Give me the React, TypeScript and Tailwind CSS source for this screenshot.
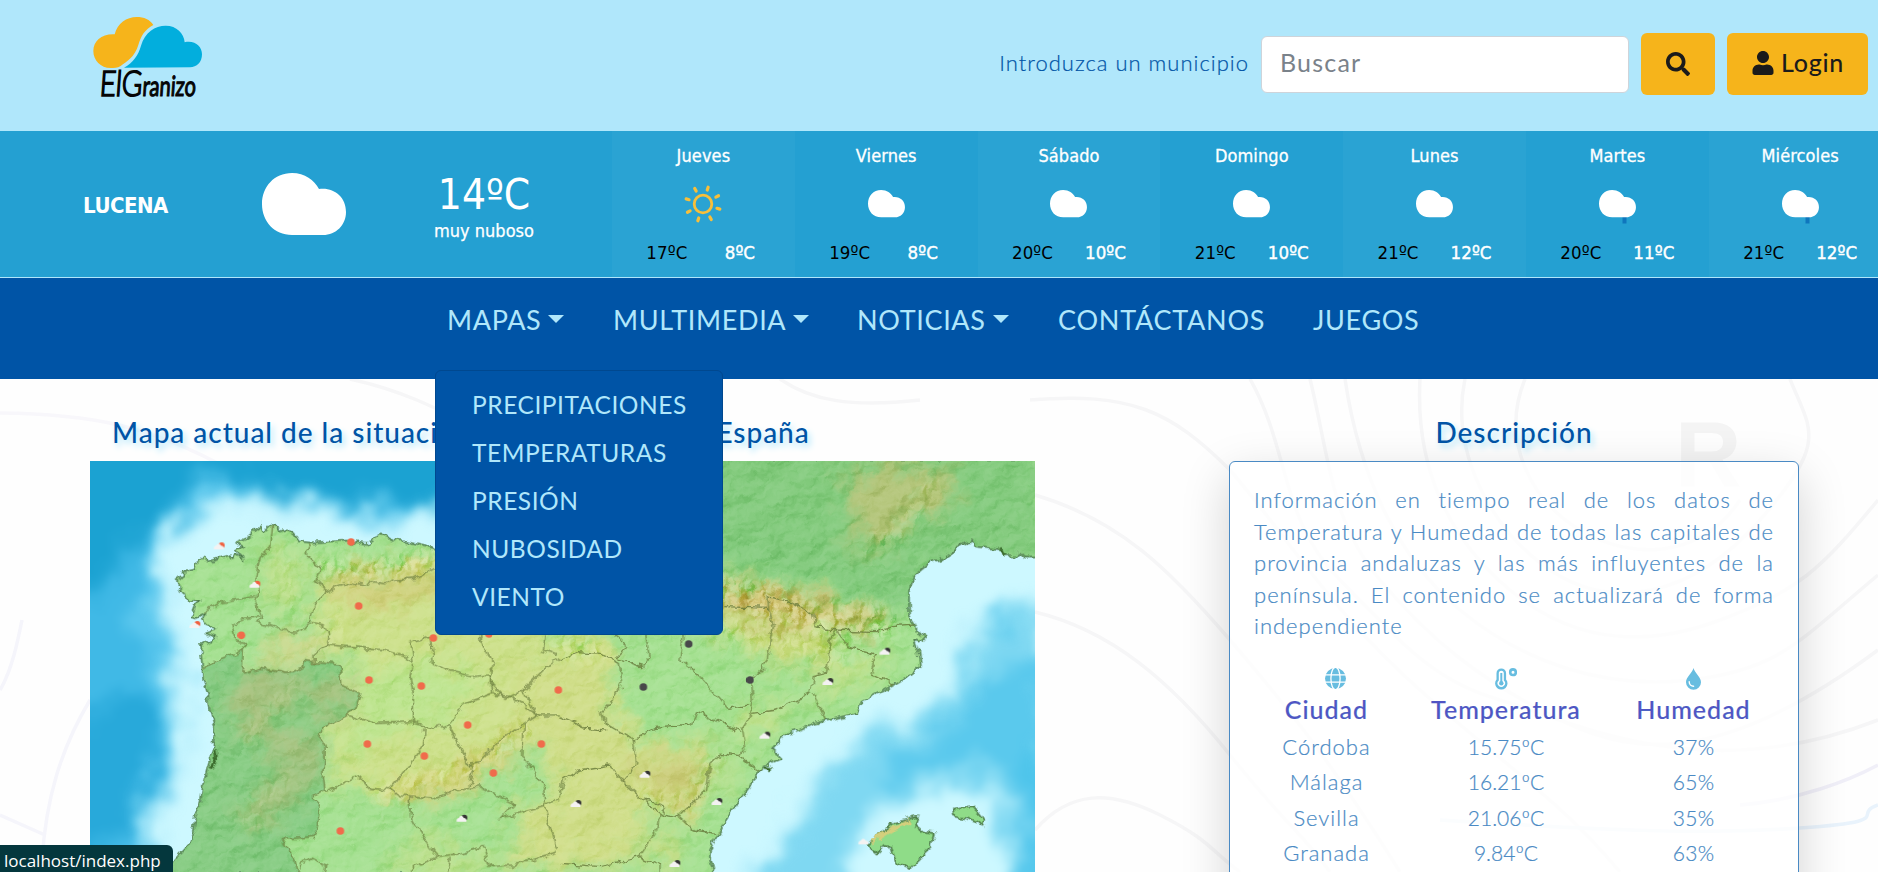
import React from "react";
import { FaSearch, FaUser } from "react-icons/fa";

const CLOUD =
  "M30 0C43 0 52 7 57 16C72 14 84 24 84 39C84 52 74 62 61 62H30C12 62 0 48 0 31C0 14 12 0 30 0Z";

function Logo() {
  return (
    <svg width="140" height="115" viewBox="0 0 420 345" className="block overflow-visible">
      <path
        fill="#f6b41b"
        d="M92 189C62 189 40 166 40 138C40 108 65 86 104 88C112 55 140 36 170 36C192 36 210 44 220 60C195 72 182 95 175 120C165 155 140 170 122 183C112 189 102 189 92 189Z"
      />
      <path
        fill="#02aedd"
        d="M132 188C160 172 175 150 183 122C195 82 225 62 257 62C290 62 312 85 314 112C345 105 366 125 366 148C366 172 350 187 330 187Z"
      />
      <g fontFamily="Lato, sans-serif" fill="#050505" stroke="#050505" transform="skewX(-4)">
        <text x="76" y="274" fontSize="106" fontWeight="300" strokeWidth="5" textLength="128" lengthAdjust="spacingAndGlyphs">
          ElG
        </text>
        <text x="205" y="274" fontSize="84" strokeWidth="3.5" textLength="160" lengthAdjust="spacingAndGlyphs">
          ranizo
        </text>
      </g>
    </svg>
  );
}

type Kind = "sun" | "cloud" | "rain";

function DayIcon({ kind }: { kind: Kind }) {
  if (kind === "sun") {
    const rays = [17, 62, 107, 152, 197, 242, 287, 332];
    return (
      <svg width="40" height="40" viewBox="-20 -20 40 40" fill="none" stroke="#f8bf3a" strokeLinecap="round">
        <circle r="8.8" strokeWidth="2.8" />
        {rays.map((r) => (
          <line key={r} y1="-14.6" y2="-17.6" strokeWidth="3.2" transform={`rotate(${r})`} />
        ))}
      </svg>
    );
  }
  return (
    <svg width="37" height="40" viewBox="0 0 37 40">
      {kind === "rain" && <path d="M25.5 30v9.5" stroke="#0f76bd" strokeWidth="4" />}
      <path d={CLOUD} fill="#fff" transform="translate(0 6) scale(.44)" />
    </svg>
  );
}

const DAYS: { name: string; kind: Kind; max: number; min: number }[] = [
  { name: "Jueves", kind: "sun", max: 17, min: 8 },
  { name: "Viernes", kind: "cloud", max: 19, min: 8 },
  { name: "Sábado", kind: "cloud", max: 20, min: 10 },
  { name: "Domingo", kind: "cloud", max: 21, min: 10 },
  { name: "Lunes", kind: "cloud", max: 21, min: 12 },
  { name: "Martes", kind: "rain", max: 20, min: 11 },
  { name: "Miércoles", kind: "rain", max: 21, min: 12 },
];

function WeatherBar() {
  return (
    <section className="flex h-[146px] overflow-hidden bg-[#24a0d2] font-['DejaVu_Sans_Condensed','DejaVu_Sans',sans-serif] text-white [font-stretch:condensed]">
      <div className="flex w-[612px] shrink-0 items-start">
        <div className="w-[251px] pt-[61px] text-center text-[22px] leading-[28px] font-bold tracking-[-0.5px]">LUCENA</div>
        <svg width="84" height="62" viewBox="0 0 84 62" className="mt-[42px] ml-[11px]">
          <path d={CLOUD} fill="#fff" />
        </svg>
        <div className="ml-[38px] w-[200px] pt-[39px] text-center">
          <div className="text-[42px] leading-[49px]">14ºC</div>
          <div className="text-[18px] leading-[24px] [-webkit-text-stroke:0.25px_white]">muy nuboso</div>
        </div>
      </div>
      {DAYS.map((d, i) => (
        <div key={d.name} className={`flex w-[182.8px] shrink-0 flex-col items-center pt-[13px] ${i % 2 ? "" : "bg-[#2aa3d3]"}`}>
          <div className="h-[24px] text-[18px] leading-[24px] tracking-[0.1px] [-webkit-text-stroke:0.3px_white]">{d.name}</div>
          <div className="mt-[16px] h-[40px]">
            <DayIcon kind={d.kind} />
          </div>
          <div className="mt-[17px] flex text-[18.5px] leading-[24px] tracking-[0.1px]">
            <span className="w-[73px] text-center text-black">{d.max}ºC</span>
            <span className="w-[73px] text-center [-webkit-text-stroke:0.4px_white]">{d.min}ºC</span>
          </div>
        </div>
      ))}
    </section>
  );
}

function Caret() {
  return <span className="mt-[-3px] ml-[7px] inline-block border-x-[8px] border-t-[8px] border-x-transparent border-t-[#b0e7fb]" />;
}

function Nav() {
  const sub = ["PRECIPITACIONES", "TEMPERATURAS", "PRESIÓN", "NUBOSIDAD", "VIENTO"];
  return (
    <nav className="relative z-20 mt-px h-[101px] bg-[#0054a6] text-[#b0e7fb]">
      <ul className="flex pt-[23px] pl-[447px] text-[27px] leading-[38px] tracking-[0.65px] whitespace-nowrap">
        <li className="flex w-[166px] items-center">MAPAS<Caret /></li>
        <li className="flex w-[244px] items-center">MULTIMEDIA<Caret /></li>
        <li className="flex w-[201px] items-center">NOTICIAS<Caret /></li>
        <li className="w-[255px] tracking-[0.75px]">CONTÁCTANOS</li>
        <li>JUEGOS</li>
      </ul>
      <ul className="absolute top-[92px] left-[435px] h-[265px] w-[288px] rounded-[6px] border border-[#00488f] bg-[#0054a6] pt-[10px] pl-[36px] text-[24.5px] tracking-[0.55px]">
        {sub.map((s) => (
          <li key={s} className="h-[48px] leading-[48px]">{s}</li>
        ))}
      </ul>
    </nav>
  );
}

/* Province borders; the second group is measured from x = 1440. */
const BORDERS_WEST = [
  "578,372 572,440 540,470 530,530 535,580 525,600 545,650 535,665 610,690 665,695",
  "370,640 425,605 525,590",
  "540,650 490,655 458,670 470,720 490,725 490,750",
  "695,428 675,460 725,510 708,545 735,575 700,620 690,665 665,695",
  "735,575 815,545 850,555 880,545 915,552 945,540 1000,538 1065,505",
  "690,665 730,675 748,710 740,735 705,760 705,790",
  "740,735 840,742 910,750 975,770 1000,790 990,730 1050,710 1060,790 1110,815 1170,830 1230,825 1235,880 1150,910 1130,945 1105,975 1060,985 1000,970 1000,880 990,830 1000,790",
  "800,945 850,960 890,970 1000,965",
  "1105,975 1140,1040 1165,1090 1200,1085 1260,1020 1330,970 1370,945 1290,890 1235,880",
  "1035,985 1030,1040 975,1110 930,1165 960,1185 1060,1195 1110,1175 1200,1160 1300,1210 1260,1255 1390,1220 1440,1195",
  "735,1175 835,1130 870,1165 930,1170",
  "1165,1090 1180,1110 1170,1160",
  "990,1190 995,1260 1030,1310 1070,1370 1140,1360 1210,1340 1230,1400 1300,1395 1430,1360",
  "1070,1370 1000,1400 990,1425",
  "1110,1370 1105,1425",
  "655,1425 670,1385 700,1375 740,1395 735,1425",
  "1330,970 1325,1060 1390,1160 1395,1220 1430,1350",
  "1195,705 1240,790 1230,850 1275,895 1330,870 1400,800 1440,775",
  "1395,705 1390,750 1430,765",
  "1330,870 1350,910 1370,945 1440,945",
  "370,805 400,785 490,750 487,800 500,822 540,805 625,820 668,800 668,785 780,795 785,855 842,880 830,920 795,945 750,970 715,1005 735,1040 735,1080 730,1130 735,1170 700,1190 720,1230 715,1280 700,1310 607,1318 640,1370 655,1425",
];
const BORDERS_EAST = [
  "490,620 625,625 625,590 690,605 760,640 770,680 830,690 950,695 1000,680 1065,675",
  "625,625 640,680 625,780 575,840 580,900 570,950 545,990 555,1050 540,1070",
  "165,705 205,740 170,775 245,800 270,770 260,705",
  "370,705 360,780 420,830 500,925 570,915",
  "0,780 50,755 120,760 175,790 185,850 155,910 125,940 135,970 220,1020 280,985 390,975 410,935 540,995",
  "0,950 80,985 135,990",
  "220,1020 230,1090 190,1145 250,1200 300,1240 355,1250 440,1170 450,1090 480,1060 540,1070 600,1115",
  "250,1200 280,1205 315,1225 300,1240",
  "0,1190 10,1140 60,1110 150,1095 190,1145",
  "300,1240 290,1290 240,1370 120,1400 0,1390",
  "240,1370 300,1395 300,1425",
  "355,1250 400,1290 470,1300",
  "575,940 650,930 750,880 760,830 800,820 810,720 830,690",
  "760,880 800,962",
  "830,690 860,740 950,765 930,820 1000,855",
];

const RED = [
  [813, 426], [836, 618], [484, 706], [867, 840], [1024, 858], [1060, 714], [1227, 702],
  [1163, 975], [862, 1032], [1033, 1068], [1384, 1032], [1240, 1119], [781, 1293], [1435, 870],
];
const DARK = [[1826, 732], [1690, 861], [2010, 840]];
const CLOUDY: [number, number, string][] = [
  [418, 437, "#f0603f"], [525, 552, "#f0603f"], [345, 673, "#f0603f"],
  [1146, 1254, "#333"], [2415, 753, "#333"], [2244, 844, "#333"], [2055, 1005, "#333"],
  [1695, 1122, "#333"], [1911, 1204, "#333"], [1488, 1210, "#333"], [1785, 1390, "#333"], [2352, 1322, "none"],
];

const MAINLAND =
  "M262 1425L282 1385 330 1330 345 1260 362 1200 370 1150 385 1090 400 1040 405 985 388 920 385 885 370 840 363 757 360 735 372 735 410 712 375 700 412 688 378 672 365 655 380 638 345 655 330 652 345 615 362 600 325 605 318 585 295 575 298 560 290 540 310 530 312 512 345 505 350 490 372 475 382 488 450 468 458 478 468 462 488 482 470 448 490 440 465 425 500 410 545 375 555 395 578 372 600 392 615 385 640 400 655 424 690 428 800 422 862 432 905 403 940 422 975 425 1065 445 1200 450 1400 430 1500 300 1520 175H2880V473H2835L2820 458 2805 470 2770 468 2758 448 2685 440 2675 423 2655 430 2580 478 2550 487 2500 530 2487 570V650L2508 680 2512 700 2537 710 2522 725 2502 720 2515 755 2520 800 2480 830 2440 855 2345 905 2325 940 2240 962 2200 972 2160 990 2125 998 2078 1050 2105 1075 2050 1098 2005 1165 1950 1240 1910 1310 1890 1350V1385L1905 1425Z";
const PORTUGAL =
  "M262 1425L282 1385 330 1330 345 1260 362 1200 385 1090 405 985 385 885 370 805 400 785 490 750 487 800 500 822 540 805 625 820 668 800 668 785 780 795 785 855 842 880 830 920 795 945 750 970 715 1005 735 1040 735 1080 730 1130 735 1170 700 1190 720 1230 715 1280 700 1310 607 1318 640 1370 655 1425Z";
const MALLORCA =
  "M2360 1335L2440 1270 2515 1250 2505 1275 2530 1295 2565 1300 2555 1340 2520 1375 2490 1405 2445 1385 2430 1340 2412 1338 2390 1360Z";
const MENORCA = "M2622 1225L2680 1218 2715 1260 2710 1280 2660 1255 2625 1250Z";

function SpainMap() {
  return (
    <svg width="945" height="411" viewBox="30 183 2835 1233" preserveAspectRatio="none" className="block">
      <defs>
        <filter id="sea" x="-200" y="0" width="3300" height="1600" filterUnits="userSpaceOnUse" colorInterpolationFilters="sRGB">
          <feGaussianBlur stdDeviation="26" result="b" />
          <feTurbulence type="fractalNoise" baseFrequency="0.009" numOctaves="5" seed="4" result="n" />
          <feDisplacementMap in="b" in2="n" scale="130" xChannelSelector="R" yChannelSelector="G" />
          <feGaussianBlur stdDeviation="9" />
        </filter>
        <filter id="jag" x="0" y="100" width="2900" height="1400" filterUnits="userSpaceOnUse" colorInterpolationFilters="sRGB">
          <feTurbulence type="fractalNoise" baseFrequency="0.035" numOctaves="3" seed="9" />
          <feDisplacementMap in="SourceGraphic" scale="26" xChannelSelector="R" yChannelSelector="G" />
        </filter>
        <filter id="patch" x="0" y="100" width="2900" height="1400" filterUnits="userSpaceOnUse" colorInterpolationFilters="sRGB">
          <feGaussianBlur stdDeviation="30" result="b" />
          <feTurbulence type="fractalNoise" baseFrequency="0.015" numOctaves="4" seed="2" result="n" />
          <feDisplacementMap in="b" in2="n" scale="130" xChannelSelector="R" yChannelSelector="G" />
        </filter>
        <filter id="fine" x="0" y="100" width="2900" height="1400" filterUnits="userSpaceOnUse" colorInterpolationFilters="sRGB">
          <feTurbulence type="fractalNoise" baseFrequency="0.011 0.015" numOctaves="4" seed="12" />
          <feDiffuseLighting surfaceScale="16" diffuseConstant="0.72" lightingColor="#fff">
            <feDistantLight azimuth="225" elevation="50" />
          </feDiffuseLighting>
        </filter>
        <filter id="rough" x="0" y="100" width="2900" height="1400" filterUnits="userSpaceOnUse" colorInterpolationFilters="sRGB">
          <feTurbulence type="fractalNoise" baseFrequency="0.026 0.018" numOctaves="3" seed="7" />
          <feDiffuseLighting surfaceScale="24" diffuseConstant="0.8" lightingColor="#fff4dc">
            <feDistantLight azimuth="225" elevation="46" />
          </feDiffuseLighting>
        </filter>
        <filter id="soft" x="0" y="100" width="2900" height="1400" filterUnits="userSpaceOnUse">
          <feGaussianBlur stdDeviation="20" />
        </filter>
        <clipPath id="land">
          <path d={MAINLAND} />
          <path d={MALLORCA} />
        </clipPath>
        <mask id="hills" maskUnits="userSpaceOnUse" x="0" y="100" width="2900" height="1400">
          <g filter="url(#soft)" fill="none" stroke="#fff" strokeLinecap="round">
            <path d="M730 500L870 510 1080 480" strokeWidth="60" />
            <path d="M1900 570L2060 600 2200 650 2400 670" strokeWidth="95" />
            <path d="M1930 690L2150 720 2280 760" strokeWidth="90" opacity=".6" />
            <path d="M2360 450L2450 400 2560 250" strokeWidth="60" opacity=".5" />
            <path d="M900 1190L1050 1140 1180 1100 1330 990" strokeWidth="50" opacity=".8" />
            <path d="M500 1230L620 1140M500 1020L640 860M560 1260L480 1270" strokeWidth="40" opacity=".4" />
            <path d="M1700 1180L1820 1220 1900 1080" strokeWidth="70" opacity=".5" />
            <path d="M1440 740L1560 760" strokeWidth="60" opacity=".8" />
            <path d="M700 740L780 670M600 460L650 640" strokeWidth="60" opacity=".4" />
          </g>
        </mask>
      </defs>

      <rect x="0" y="150" width="2900" height="1300" fill="#cdf8ff" />
      <g filter="url(#sea)">
        <path fill="#5cc8ee" d="M-100 50H1500V240L1300 270 1160 300 1060 310 940 370 850 350 760 340 560 295 380 290 330 370 220 430 255 520 250 640 280 760 300 850 290 960 310 1060 260 1150 200 1240 230 1400 180 1500H-100Z" />
        <path fill="#40b9e6" d="M-100 300H180L200 560 130 700 200 760 240 880 265 1000 240 1180 150 1250 140 1500H-100Z" />
        <path fill="#1ba2d2" d="M-100 50H1300V230L1150 290 980 310 850 320 640 290 540 275 440 235 330 235 290 360 130 440 70 560-100 620Z" />
        <path fill="#28a9da" d="M-100 900L60 950 100 860 220 930 250 1050 200 1150 150 1280 60 1340-100 1380Z" />
        <path fill="#7fd8f2" d="M2900 620L2720 690 2640 700 2640 870 2500 960 2400 1000 2280 1060 2200 1150 2160 1280 2040 1400 2020 1600H2900Z" />
        <path fill="#5ac9ed" d="M2920 760L2700 820 2600 980 2420 1080 2400 1160 2560 1100 2720 1080 2800 1150 2830 1300 2820 1550H2920Z" />
        <path fill="#4cc4eb" d="M2730 640L2780 620 2780 700 2730 720ZM2920 1000L2820 1100 2850 1300 2850 1550H2920Z" />
        <path fill="#cdf8ff" d="M2300 1440L2340 1290 2460 1200 2600 1150 2710 1160 2770 1230 2770 1500H2300Z" />
      </g>

      <g filter="url(#jag)">
        <g clipPath="url(#land)" className="isolate">
          <rect x="0" y="150" width="2900" height="1300" fill="#a4e090" />
          <g filter="url(#patch)">
            <path fill="#82ca7c" d="M1450 100H2900V500L2540 520 2480 660 2300 590 2000 520 1450 500Z" />
            <path fill="#cce08a" d="M720 560L1100 480 1400 560 1420 900 1240 1100 960 1180 760 1160 740 960 820 800 700 720Z" />
            <path fill="#bde48e" d="M800 780L1200 800 1200 900 800 1080Z" />
            <path fill="#d0cc78" d="M740 560L1000 550 1200 500 1200 570 860 620Z" />
            <path fill="#cfdd88" d="M1300 800L1620 760 1600 950 1760 1040 1900 1000 1860 1260 1700 1230 1640 1400H1300V1230L1440 1180 1330 1000Z" />
            <path fill="#cacb78" d="M1640 1080L1880 1070 1840 1230 1720 1180Z" />
            <path fill="#d0ba70" d="M1900 540L2080 570 2400 650 2380 690 2160 670 1930 640Z" />
            <path fill="#ccdb84" d="M1900 650L2250 700 2280 800 2060 780 1930 710Z" />
            <path fill="#cfe08c" d="M1440 690L1600 720 1580 770 1440 790Z" />
            <path fill="#c4e08a" d="M1980 930L2240 900 2400 820 2420 780 2280 780 2220 870 1960 1060 1900 1180 1960 1160Z" />
            <path fill="#c8dc84" d="M1690 1300L1800 1320 1800 1400 1690 1380Z" />
            <path fill="#d6cf7c" d="M900 1170L1100 1130 1320 980 1340 1020 1160 1170 980 1220Z" />
            <path fill="#d2d68c" d="M560 730L720 700 760 760 640 790 520 800Z" />
            <path fill="#d2cf80" d="M720 500L900 510 1060 470 1060 520 760 560Z" />
            <path fill="#c6c276" d="M2300 200L2640 200 2590 330 2500 320 2460 430 2330 450Z" opacity=".7" />
            <path fill="#c4de86" d="M560 440L680 480 640 620 560 640Z" opacity=".7" />
            <path fill="#c4df8a" d="M1000 1300L1300 1380 1200 1440 900 1440Z" opacity=".7" />
          </g>
          <path d={PORTUGAL} fill="#82c980" opacity=".9" />
          <g filter="url(#patch)" opacity=".5">
            <path fill="#c9b67a" d="M470 830L700 820 620 900 540 1000 460 980Z" />
            <path fill="#c9b67a" d="M640 1090L560 1180 460 1240 560 1280 700 1140Z" />
            <path fill="#c9b67a" d="M660 830L830 850 800 930 700 950Z" />
            <path fill="#c9b67a" d="M480 980L700 1000 720 1120 560 1060Z" />
          </g>
          <g className="mix-blend-soft-light" opacity=".55">
            <rect x="0" y="150" width="2900" height="1300" filter="url(#fine)" />
          </g>
          <g className="mix-blend-overlay" opacity=".65">
            <g mask="url(#hills)">
              <rect x="0" y="150" width="2900" height="1300" filter="url(#rough)" />
            </g>
          </g>
        </g>
        <path d={MAINLAND} fill="none" stroke="#4c7a48" strokeWidth="4.5" strokeLinejoin="round" />
        <g fill="#8fdc88" stroke="#4c7a48" strokeWidth="5">
          <path d={MALLORCA} />
          <path d={MENORCA} />
        </g>
        <path d="M2375 1325L2430 1290 2490 1262" stroke="#d3cf7c" strokeWidth="12" fill="none" />
        <g fill="none" stroke="#66783a" strokeWidth="4" opacity=".8">
          {BORDERS_WEST.map((p) => (
            <polyline key={p} points={p} />
          ))}
          <g transform="translate(1440 0)">
            {BORDERS_EAST.map((p) => (
              <polyline key={p} points={p} />
            ))}
          </g>
        </g>
        <path d="M405 1045l4 30-12 20-8 10M2755 440l20 30M2050 1102l25 4" stroke="#3a6a2c" strokeWidth="8" fill="none" />
      </g>

      {RED.map(([x, y]) => (
        <circle key={`${x}-${y}`} cx={x} cy={y} r="11.5" fill="#f06b4b" />
      ))}
      {DARK.map(([x, y]) => (
        <circle key={`${x}-${y}`} cx={x} cy={y} r="11.5" fill="#48484a" />
      ))}
      {CLOUDY.map(([x, y, c]) => (
        <g key={`${x}-${y}`} transform={`translate(${x} ${y})`}>
          <circle cx="7" cy="-1" r="9" fill={c} />
          <path d="M-16 11C-18 4-13 0-9 0C-7-7 2-8 5 0C12 0 14 5 13 11Z" fill="#f4f2f2" />
        </g>
      ))}
    </svg>
  );
}

function Contours() {
  return (
    <svg width="1878" height="493" viewBox="0 379 1878 493" className="absolute inset-0" fill="none" stroke="#f6f6f7" strokeWidth="3.5">
      <path d="M0 413C90 414 150 425 230 470" stroke="#f8f7fb" />
      <path d="M350 379C400 390 430 405 480 430M780 379C810 400 850 408 920 400" />
      <path d="M42 860C46 800 60 750 90 700M0 815L45 835M0 690C12 670 18 640 22 620" stroke="#f5f5fb" />
      <path d="M1030 400C1130 392 1170 410 1230 470C1290 540 1330 610 1420 690S1560 800 1620 872" />
      <path d="M1035 495C1120 520 1170 570 1230 640S1330 760 1400 872" />
      <path d="M1035 612C1110 630 1170 680 1230 755S1300 830 1330 872" />
      <path d="M1035 830C1070 790 1110 790 1160 815S1210 850 1240 872" />
      <path d="M1250 379C1290 450 1280 520 1340 580S1430 680 1500 700S1700 790 1878 720" />
      <path d="M1310 379C1330 460 1330 520 1380 580S1480 680 1560 720S1730 760 1878 650" />
      <path d="M1345 379C1360 480 1400 560 1460 610S1600 690 1690 680S1800 640 1878 575" />
      <path d="M1420 379C1415 470 1450 540 1510 590S1640 650 1720 620S1820 570 1878 500" />
      <path d="M1465 379C1450 450 1490 530 1550 570S1690 600 1760 520S1810 430 1790 379" />
      <path d="M1525 379C1500 440 1530 500 1580 530S1700 560 1740 500" />
      <path d="M1440 820C1600 830 1700 835 1800 828S1850 815 1878 805" stroke="#e9f3fc" />
      <path d="M1740 805C1800 800 1850 780 1878 765" stroke="#f0eff8" />
      <text x="1675" y="486" fontFamily="Liberation Sans, sans-serif" fontWeight="700" fontSize="92" fill="#f4f4f4" stroke="none">
        R
      </text>
    </svg>
  );
}

function GlobeIcon() {
  return (
    <svg width="21" height="21" viewBox="0 0 21 21">
      <circle cx="10.5" cy="10.5" r="10.5" fill="#67bde0" />
      <g fill="none" stroke="#fff" strokeWidth="1.3">
        <path d="M0 6.8H21M0 14.2H21" />
        <ellipse cx="10.5" cy="10.5" rx="4.6" ry="11.2" />
      </g>
    </svg>
  );
}

function ThermometerIcon() {
  return (
    <svg width="22" height="22" viewBox="0 0 22 22" fill="none">
      <path d="M1.5 5.2a4.8 4.8 0 0 1 9.6 0v6.3a6.2 6.2 0 1 1-9.6 0Z" fill="#67bde0" />
      <path d="M3.8 5.2a2.5 2.5 0 0 1 5 0v7.2a3.7 3.7 0 1 1-5 0Z" fill="#fff" />
      <path d="M6.3 5v9" stroke="#67bde0" strokeWidth="2" />
      <circle cx="6.3" cy="15.3" r="2.2" fill="#67bde0" />
      <circle cx="18" cy="4.2" r="2.8" stroke="#67bde0" strokeWidth="2.6" />
    </svg>
  );
}

function DropIcon() {
  return (
    <svg width="15" height="22" viewBox="0 0 15 22">
      <path d="M7.5 0C8.6 5 15 8.7 15 14.3A7.5 7.5 0 0 1 0 14.3C0 8.7 6.4 5 7.5 0Z" fill="#67bde0" />
      <path d="M3.2 13.8A4.4 4.4 0 0 0 7.6 18.2" stroke="#fff" strokeWidth="1.4" fill="none" strokeLinecap="round" />
    </svg>
  );
}

const ROWS = [
  ["Córdoba", "15.75ºC", "37%"],
  ["Málaga", "16.21ºC", "65%"],
  ["Sevilla", "21.06ºC", "35%"],
  ["Granada", "9.84ºC", "63%"],
];

export default function App() {
  return (
    <div className="relative h-[872px] w-[1878px] overflow-hidden bg-[#b0e7fb] font-['Lato','Open_Sans',sans-serif]">
      <header className="flex h-[131px] justify-between pr-[10px] pl-[80px]">
        <div className="pt-[5px]">
          <Logo />
        </div>
        <div className="flex h-[128px] items-center text-[25px]">
          <span className="mr-[12px] pb-[3px] text-[22px] font-light tracking-[1px] text-[#0054a6] [-webkit-text-stroke:0.2px_#0054a6]">
            Introduzca un municipio
          </span>
          <div className="flex h-[57px] w-[368px] items-center rounded-[6px] border border-[#ced4da] bg-white pb-[3px] pl-[18px] tracking-[1.2px] text-[#7a828a]">
            Buscar
          </div>
          <button className="ml-[12px] flex h-[62px] w-[74px] items-center justify-center rounded-[6px] bg-[#f6b41b] pb-[1px] text-[24px] text-[#1b1b1b]">
            <FaSearch />
          </button>
          <button className="ml-[12px] flex h-[62px] w-[141px] items-center justify-center rounded-[6px] bg-[#f6b41b] pb-[3px] font-medium tracking-[0.7px] text-[#1b1b1b]">
            <FaUser className="mr-[6px] text-[24px]" />
            Login
          </button>
        </div>
      </header>
      <WeatherBar />
      <Nav />
      <main className="relative flex h-[493px] overflow-hidden bg-[#fefefe]">
        <Contours />
        <section className="relative ml-[90px] w-[945px]">
          <h2 className="h-[82px] pt-[33px] pl-[22px] text-[28px] leading-[40px] font-medium tracking-[0.97px] whitespace-nowrap text-[#0054a6] [text-shadow:3px_4px_6px_#b0e7fb]">
            Mapa actual de la situación meteorológica en España
          </h2>
          <SpainMap />
        </section>
        <section className="relative ml-[194px] flex w-[570px] flex-col">
          <h2 className="h-[82px] shrink-0 self-center pt-[33px] text-[28px] leading-[40px] font-medium tracking-[1px] text-[#0054a6] [text-shadow:3px_4px_6px_#b0e7fb]">
            Descripción
          </h2>
          <div className="h-[620px] shrink-0 rounded-[6px] border border-[#4a8ac4] bg-white/80 px-[24px] pt-[22px] text-[22px] font-light text-[#4a8ac4] shadow-[0_16px_48px_rgba(0,0,0,0.175)] [-webkit-text-stroke:0.2px_#4a8ac4]">
            <p className="text-justify leading-[31.5px] tracking-[1px]">
              Información en tiempo real de los datos de Temperatura y Humedad de todas las capitales de provincia andaluzas y las más influyentes de la península. El contenido se actualizará de forma independiente
            </p>
            <div className="mt-[26px] grid grid-cols-[145px_214px_161px] justify-items-center text-center">
              <div className="h-[24px] pl-[18px]"><GlobeIcon /></div>
              <div className="h-[24px]"><ThermometerIcon /></div>
              <div className="h-[24px]"><DropIcon /></div>
              {["Ciudad", "Temperatura", "Humedad"].map((h) => (
                <div key={h} className="h-[37px] text-[25px] leading-[34px] font-medium tracking-[1px] text-[#5054c4]">{h}</div>
              ))}
              {ROWS.map(([city, temp, hum]) => (
                <React.Fragment key={city}>
                  <div className="h-[35.5px] leading-[35.5px] tracking-[1px]">{city}</div>
                  <div className="h-[35.5px] text-[21px] leading-[35.5px]">{temp}</div>
                  <div className="h-[35.5px] text-[21px] leading-[35.5px] tracking-[0.3px]">{hum}</div>
                </React.Fragment>
              ))}
            </div>
          </div>
        </section>
      </main>
      <div className="absolute bottom-0 left-0 z-30 h-[27px] w-[173px] rounded-tr-[6px] bg-[#04373d] pl-[4px] font-['Open_Sans',sans-serif] text-[17px] leading-[32px] text-white">
        localhost/index.php
      </div>
    </div>
  );
}
